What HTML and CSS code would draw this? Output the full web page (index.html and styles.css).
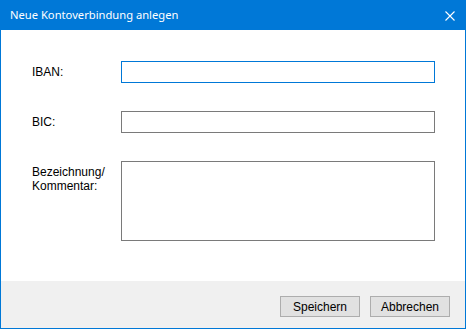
FILE: index.html
```html
<!DOCTYPE html>
<html lang="de">
<head>
<meta charset="utf-8">
<title>Neue Kontoverbindung anlegen</title>
<link rel="stylesheet" href="styles.css">
</head>
<body>
<div class="window">
  <div class="titlebar">
    <span class="title">Neue Kontoverbindung anlegen</span>
    <svg class="close" width="10" height="10" viewBox="0 0 10 10"><path d="M0.5 0.5 L9.5 9.5 M9.5 0.5 L0.5 9.5" stroke="#fff" stroke-width="1.1" fill="none"/></svg>
  </div>
  <div class="content">
    <div class="form">
      <label class="label">IBAN:</label>
      <div class="field field-focus"></div>
      <label class="label">BIC:</label>
      <div class="field"></div>
      <label class="label">Bezeichnung/<br>Kommentar:</label>
      <div class="field field-area"></div>
    </div>
  </div>
  <div class="footer">
    <button class="btn">Speichern</button>
    <button class="btn">Abbrechen</button>
  </div>
</div>
</body>
</html>
```
FILE: styles.css
```css
html, body {
  margin: 0;
  padding: 0;
  background: #ffffff;
}
.window {
  width: 466px;
  height: 329px;
  box-sizing: border-box;
  border: 1px solid #0078d7;
  display: flex;
  flex-direction: column;
  font-family: "Liberation Sans", Arial, sans-serif;
  font-size: 12px;
  color: #000;
}
.titlebar {
  height: 29px;
  flex: none;
  background: #0078d7;
  display: flex;
  align-items: center;
  padding: 0 10px 0 9px;
  justify-content: space-between;
}
.title {
  color: #fff;
  font-family: "Noto Sans", "Open Sans", sans-serif;
  font-size: 11.2px;
  line-height: 16px;
  margin-top: -1px;
}
.close {
  display: block;
  margin-top: 1px;
}
.content {
  flex: 1;
  background: #fff;
  padding: 31px 0 0 31px;
}
.form {
  display: grid;
  grid-template-columns: 89px 314px;
  row-gap: 28px;
}
.label {
  line-height: 14px;
  padding-top: 4px;
}
.field {
  height: 22px;
  box-sizing: border-box;
  border: 1px solid #7a7a7a;
  background: #fff;
}
.field-focus {
  border-color: #0078d7;
}
.field-area {
  height: 80px;
}
.footer {
  height: 47px;
  flex: none;
  box-sizing: border-box;
  background: #f0f0f0;
  display: flex;
  justify-content: flex-end;
  align-items: flex-start;
  gap: 10px;
  padding: 15px 15px 0 0;
}
.btn {
  width: 80px;
  height: 21px;
  box-sizing: border-box;
  border: 1px solid #adadad;
  background: #e1e1e1;
  font-family: "Liberation Sans", Arial, sans-serif;
  font-size: 12px;
  color: #000;
  padding: 0;
  margin: 0;
  line-height: 18px;
}
```
